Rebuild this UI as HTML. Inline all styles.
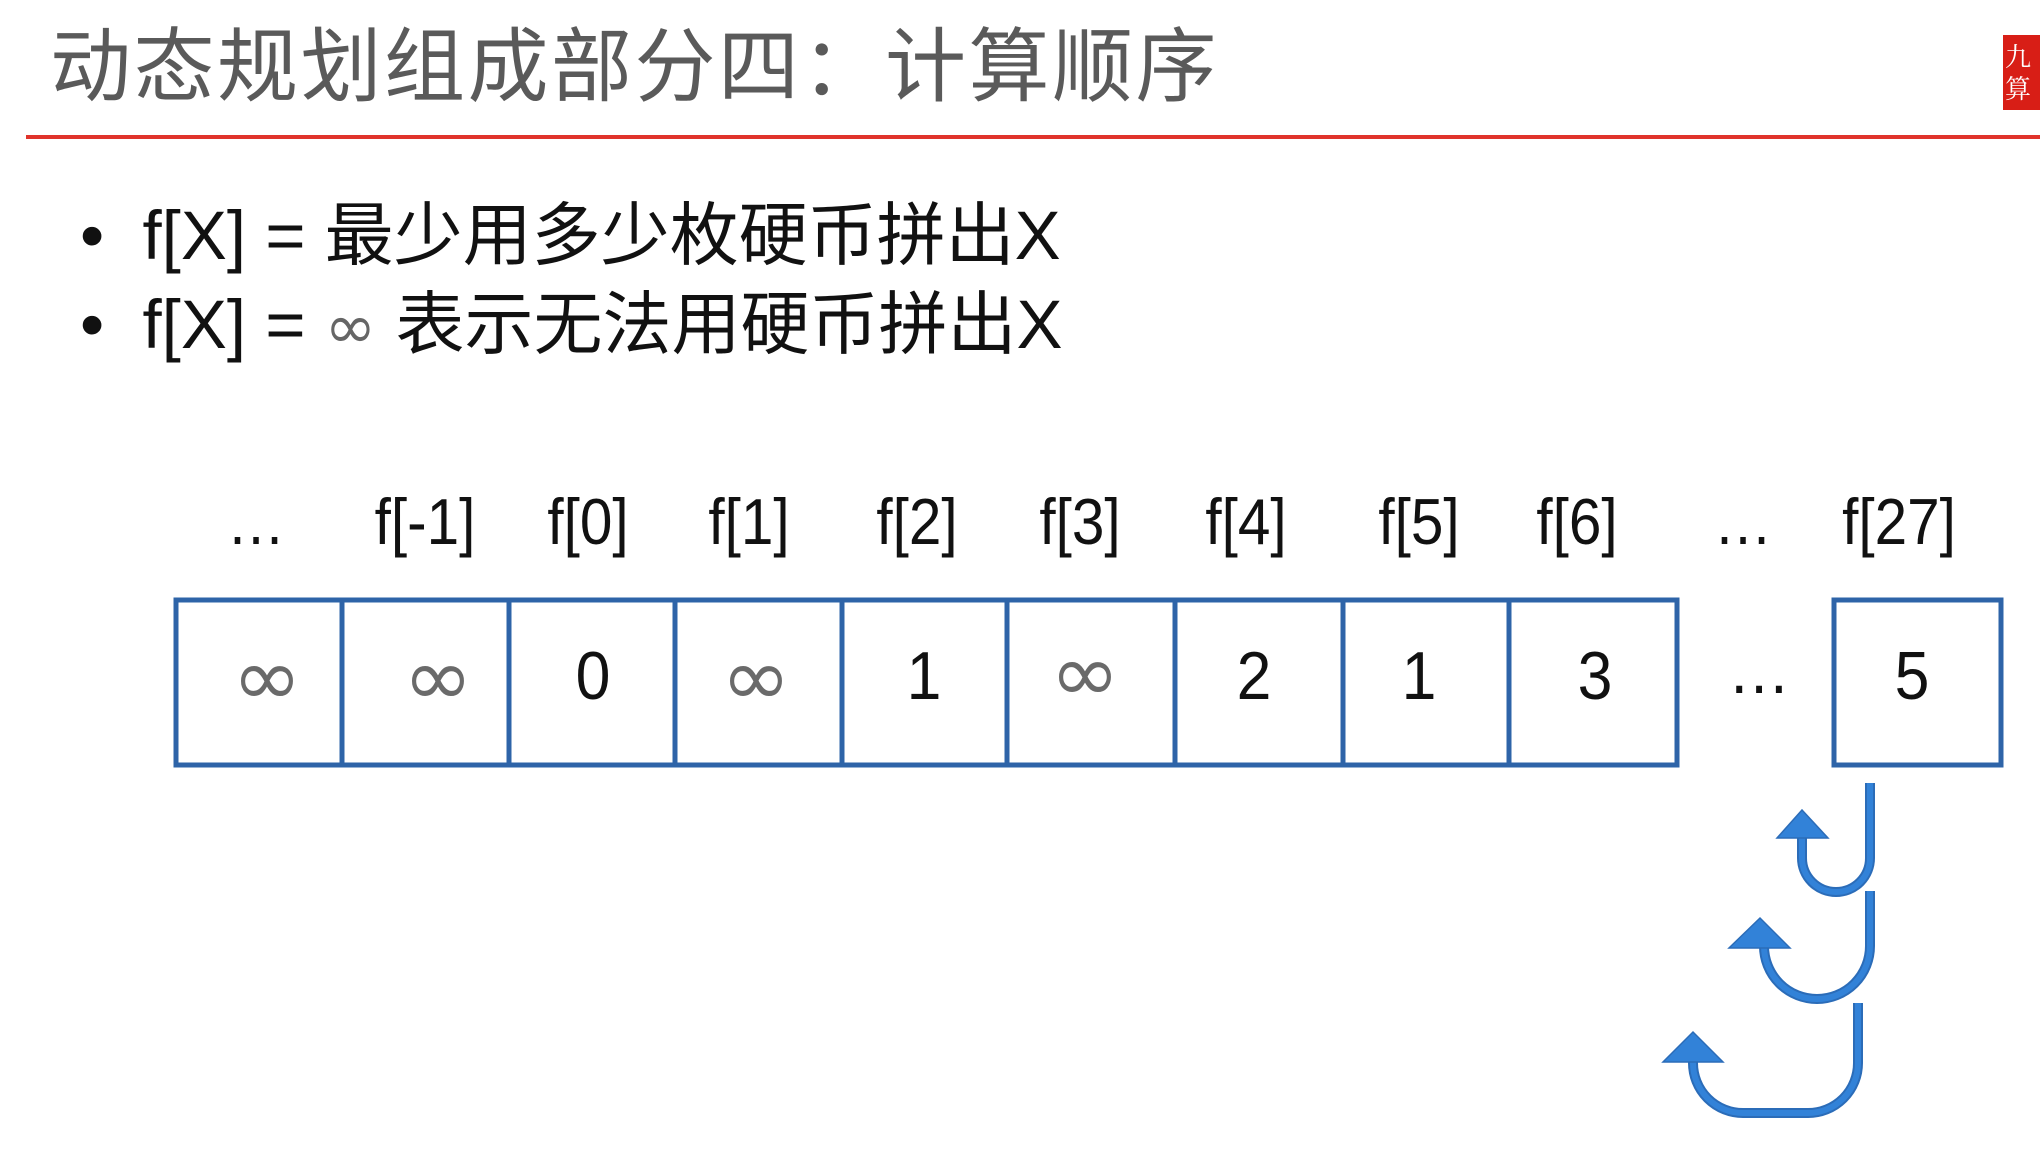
<!DOCTYPE html>
<html><head><meta charset="utf-8"><style>
html,body{margin:0;padding:0;background:#fff;}
body{width:2040px;height:1157px;position:relative;overflow:hidden;font-family:"Liberation Sans","Noto Sans CJK SC",sans-serif;}
.t{position:absolute;white-space:nowrap;}
.title{left:50px;top:18px;font-size:81px;color:#5a5a5a;letter-spacing:2.5px;line-height:100px;}
.b{left:80px;font-size:69px;color:#111;line-height:80px;}
.lab{position:absolute;top:487px;font-size:65px;color:#111;line-height:70px;transform:translateX(-50%) scaleX(0.9);white-space:nowrap;}
.val{position:absolute;top:638px;font-size:68px;color:#111;line-height:76px;transform:translateX(-50%) scaleX(0.92);white-space:nowrap;}
.inf{color:#6a6a6a;font-size:80px;font-family:"DejaVu Sans",sans-serif;transform:translateX(-50%) scaleX(1.05);}
</style></head><body>
<div class="t title">动态规划组成部分四：计算顺序</div>
<div style="position:absolute;left:26px;top:135px;width:2014px;height:4px;background:#e0332b;"></div>
<div style="position:absolute;left:2003px;top:35px;width:37px;height:75px;background:#d81e16;"></div>
<div style="position:absolute;left:2005px;top:40px;color:#fff;font-size:26px;line-height:32px;font-family:'Noto Serif CJK SC',serif;">九<br>算</div>

<div class="t b" style="top:196px;">•&nbsp; f[X] = 最少用多少枚硬币拼出X</div>
<div class="t b" style="top:285px;">•&nbsp; f[X] = <span style="color:#666;font-family:'DejaVu Sans',sans-serif;font-size:62px">∞</span> 表示无法用硬币拼出X</div>

<div class="lab" style="left:256px">…</div>
<div class="lab" style="left:425px">f[-1]</div>
<div class="lab" style="left:588px">f[0]</div>
<div class="lab" style="left:749px">f[1]</div>
<div class="lab" style="left:917px">f[2]</div>
<div class="lab" style="left:1080px">f[3]</div>
<div class="lab" style="left:1246px">f[4]</div>
<div class="lab" style="left:1419px">f[5]</div>
<div class="lab" style="left:1577px">f[6]</div>
<div class="lab" style="left:1743px">…</div>
<div class="lab" style="left:1899px">f[27]</div>

<svg width="2040" height="1157" style="position:absolute;left:0;top:0">
<g fill="none" stroke="#2e64a8" stroke-width="5">
<rect x="176" y="600" width="1501" height="165"/>
<line x1="342" y1="600" x2="342" y2="765"/>
<line x1="509" y1="600" x2="509" y2="765"/>
<line x1="675" y1="600" x2="675" y2="765"/>
<line x1="842" y1="600" x2="842" y2="765"/>
<line x1="1007" y1="600" x2="1007" y2="765"/>
<line x1="1175" y1="600" x2="1175" y2="765"/>
<line x1="1343" y1="600" x2="1343" y2="765"/>
<line x1="1509" y1="600" x2="1509" y2="765"/>
<rect x="1834" y="600" width="167" height="165"/>
</g>
<g fill="none" stroke="#2b6cb8" stroke-width="10">
<path d="M1870 783 V858 A34 34 0 0 1 1802 858 V836"/>
<path d="M1870 891 V946 A53 53 0 0 1 1764 946 V944"/>
<path d="M1858 1003 V1063 A50 50 0 0 1 1808 1113 H1743 A50 50 0 0 1 1693 1063 V1058"/>
</g>
<g fill="none" stroke="#3282d8" stroke-width="6">
<path d="M1870 783 V858 A34 34 0 0 1 1802 858 V836"/>
<path d="M1870 891 V946 A53 53 0 0 1 1764 946 V944"/>
<path d="M1858 1003 V1063 A50 50 0 0 1 1808 1113 H1743 A50 50 0 0 1 1693 1063 V1058"/>
</g>
<g fill="#3282d8" stroke="#2b6cb8" stroke-width="1.5">
<polygon points="1777,838 1828,838 1802,810"/>
<polygon points="1729,948 1790,948 1760,918"/>
<polygon points="1663,1062 1723,1062 1693,1032"/>
</g>
</svg>

<div class="val inf" style="left:267px;top:640px">∞</div>
<div class="val inf" style="left:438px;top:640px">∞</div>
<div class="val" style="left:593px">0</div>
<div class="val inf" style="left:756px;top:640px">∞</div>
<div class="val" style="left:924px">1</div>
<div class="val inf" style="left:1085px;top:636px">∞</div>
<div class="val" style="left:1254px">2</div>
<div class="val" style="left:1419px">1</div>
<div class="val" style="left:1595px">3</div>
<div class="val" style="left:1759px;top:632px">…</div>
<div class="val" style="left:1912px">5</div>
</body></html>
